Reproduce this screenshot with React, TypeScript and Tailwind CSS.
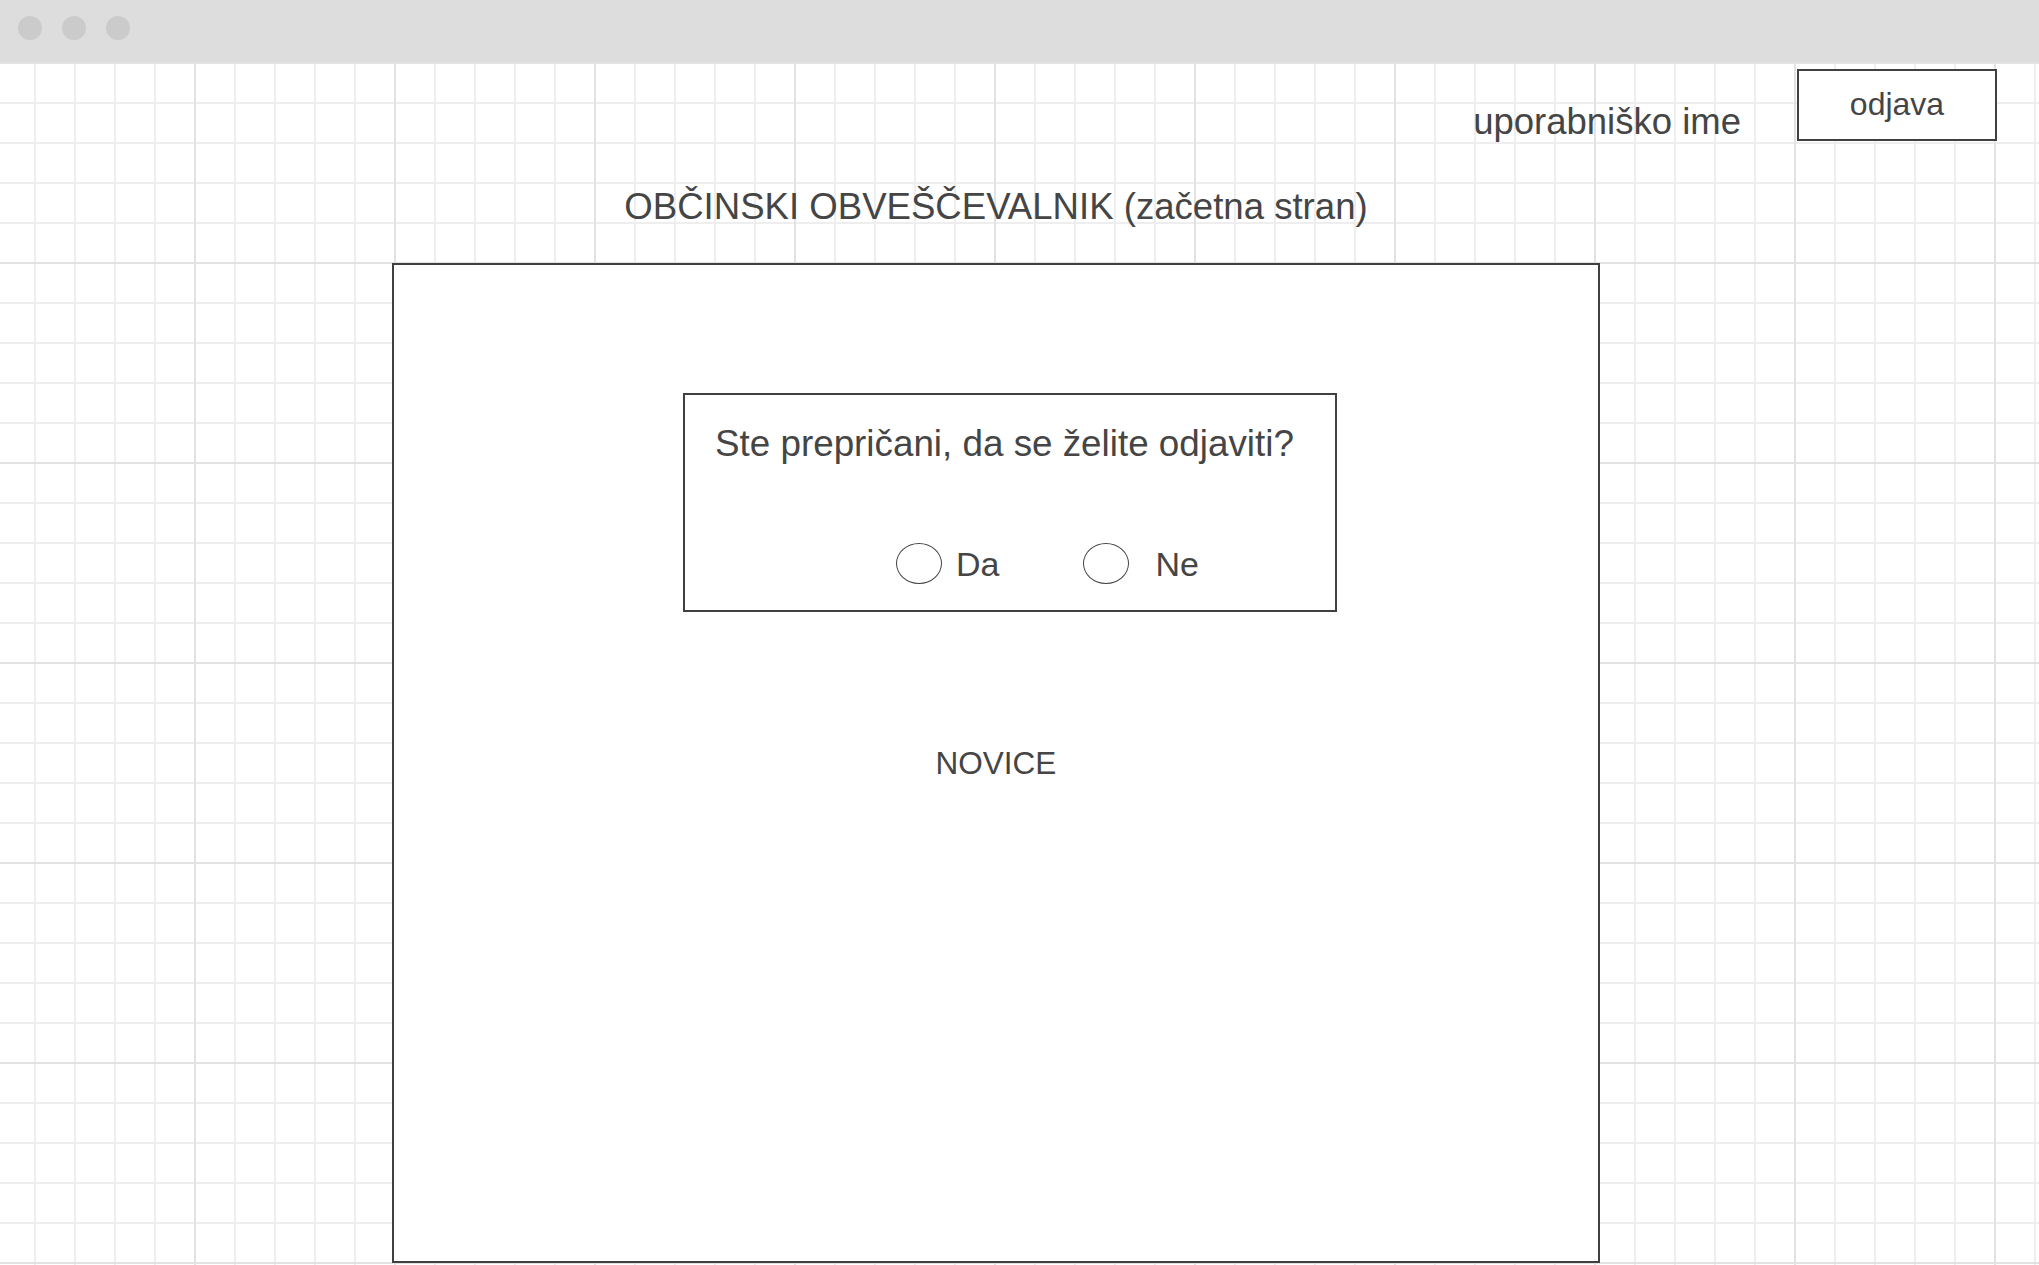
import React from "react";

function RadioOption({ label, gap }: { label: string; gap: string }) {
	return (
		<div className="flex items-center">
			<span className="block w-[46px] h-[41px] rounded-[50%] border-[1.5px] border-[#444444]" />
			<span className={`${gap} text-[34px] leading-[34px]`}>{label}</span>
		</div>
	);
}

export default function App() {
	return (
		<div className="h-[1265px] overflow-hidden flex flex-col bg-white text-[#454545] font-['Liberation_Sans',Arial,sans-serif]">
			{/* window chrome */}
			<div className="h-[62px] shrink-0 bg-[#dddddd] flex items-start gap-[20px] pl-[18px] pt-[16px]">
				<span className="w-[24px] h-[24px] rounded-full bg-[#cbcbcb]" />
				<span className="w-[24px] h-[24px] rounded-full bg-[#cbcbcb]" />
				<span className="w-[24px] h-[24px] rounded-full bg-[#cbcbcb]" />
			</div>

			<main className="flex-1 [background-image:linear-gradient(to_right,#e2e2e2_2px,transparent_2px),linear-gradient(to_bottom,#e2e2e2_2px,transparent_2px),linear-gradient(to_right,#eeeeee_2px,transparent_2px),linear-gradient(to_bottom,#eeeeee_2px,transparent_2px)] [background-size:200px_100%,100%_200px,40px_100%,100%_40px] [background-position:194px_0,0_0,34px_0,0_0]">
				<header className="flex justify-end items-start gap-[56px] pr-[42px] pt-[7px]">
					<span className="mt-[35px] text-[36.5px] leading-[36px]">uporabniško ime</span>
					<button className="w-[200px] h-[72px] border-2 border-[#404040] bg-white text-[32px] leading-[32px] pb-[2px] flex items-center justify-center">
						odjava
					</button>
				</header>

				<div className="ml-[392px] w-[1208px]">
					<h1 className="mt-[48px] text-center text-[36.6px] leading-[36px] font-normal">
						OBČINSKI OBVEŠČEVALNIK (začetna stran)
					</h1>

					<section className="mt-[38px] h-[1000px] border-2 border-[#404040] bg-white flex flex-col">
						<div className="ml-[289px] mt-[128px] w-[654px] h-[219px] border-2 border-[#404040] pt-[30px] pl-[30px]">
							<p className="text-[36.8px] leading-[37px]">Ste prepričani, da se želite odjaviti?</p>
							<div className="mt-[81px] ml-[181px] flex items-center">
								<RadioOption label="Da" gap="ml-[14px]" />
								<div className="ml-[84px]">
									<RadioOption label="Ne" gap="ml-[26px]" />
								</div>
							</div>
						</div>

						<p className="mt-[136px] text-center text-[31.5px] leading-[31px]">NOVICE</p>
					</section>
				</div>
			</main>
		</div>
	);
}
